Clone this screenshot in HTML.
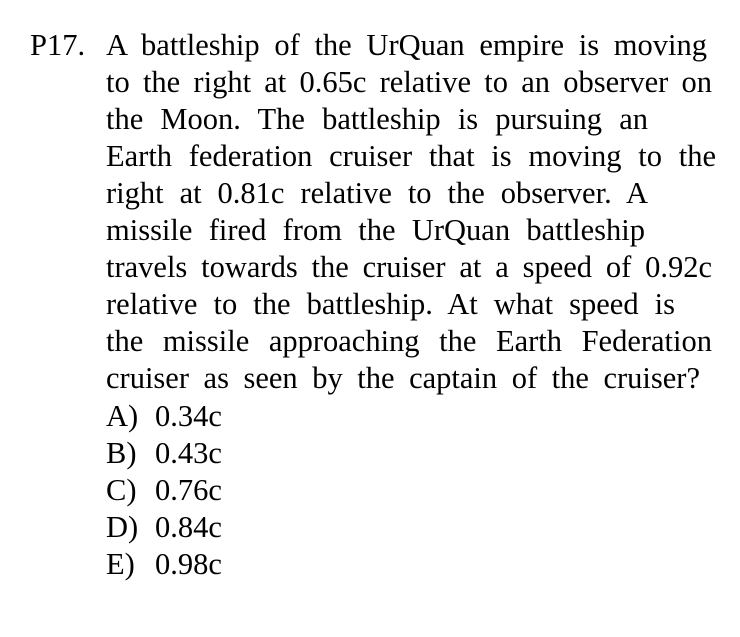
<!DOCTYPE html>
<html><head><style>
body{margin:0;width:740px;height:637px;background:#fff;overflow:hidden;font-family:"Liberation Serif",serif;font-size:30.5px;color:#000}
.l{position:absolute;left:106px;height:37px;line-height:37px;white-space:nowrap;text-align:justify;text-align-last:justify}
.p{position:absolute;left:30px;top:27px;line-height:37px}
.o{position:absolute;left:106px;line-height:37px;white-space:nowrap}
.o span{position:absolute;left:49px}
</style></head><body>
<div class="p">P17.</div>
<div class="l" style="top:27px;width:601px">A battleship of the UrQuan empire is moving</div>
<div class="l" style="top:64px;width:606px">to the right at 0.65c relative to an observer on</div>
<div class="l" style="top:101px;width:542px">the Moon. The battleship is pursuing an</div>
<div class="l" style="top:138px;width:610px">Earth federation cruiser that is moving to the</div>
<div class="l" style="top:175px;width:542px">right at 0.81c relative to the observer. A</div>
<div class="l" style="top:212px;width:539px">missile fired from the UrQuan battleship</div>
<div class="l" style="top:249px;width:606px">travels towards the cruiser at a speed of 0.92c</div>
<div class="l" style="top:286px;width:569px">relative to the battleship. At what speed is</div>
<div class="l" style="top:323px;width:606px">the missile approaching the Earth Federation</div>
<div class="l" style="top:360px;width:594px">cruiser as seen by the captain of the cruiser?</div>
<div class="o" style="top:398px">A)<span>0.34c</span></div>
<div class="o" style="top:435px">B)<span>0.43c</span></div>
<div class="o" style="top:472px">C)<span>0.76c</span></div>
<div class="o" style="top:509px">D)<span>0.84c</span></div>
<div class="o" style="top:546px">E)<span>0.98c</span></div>
</body></html>
